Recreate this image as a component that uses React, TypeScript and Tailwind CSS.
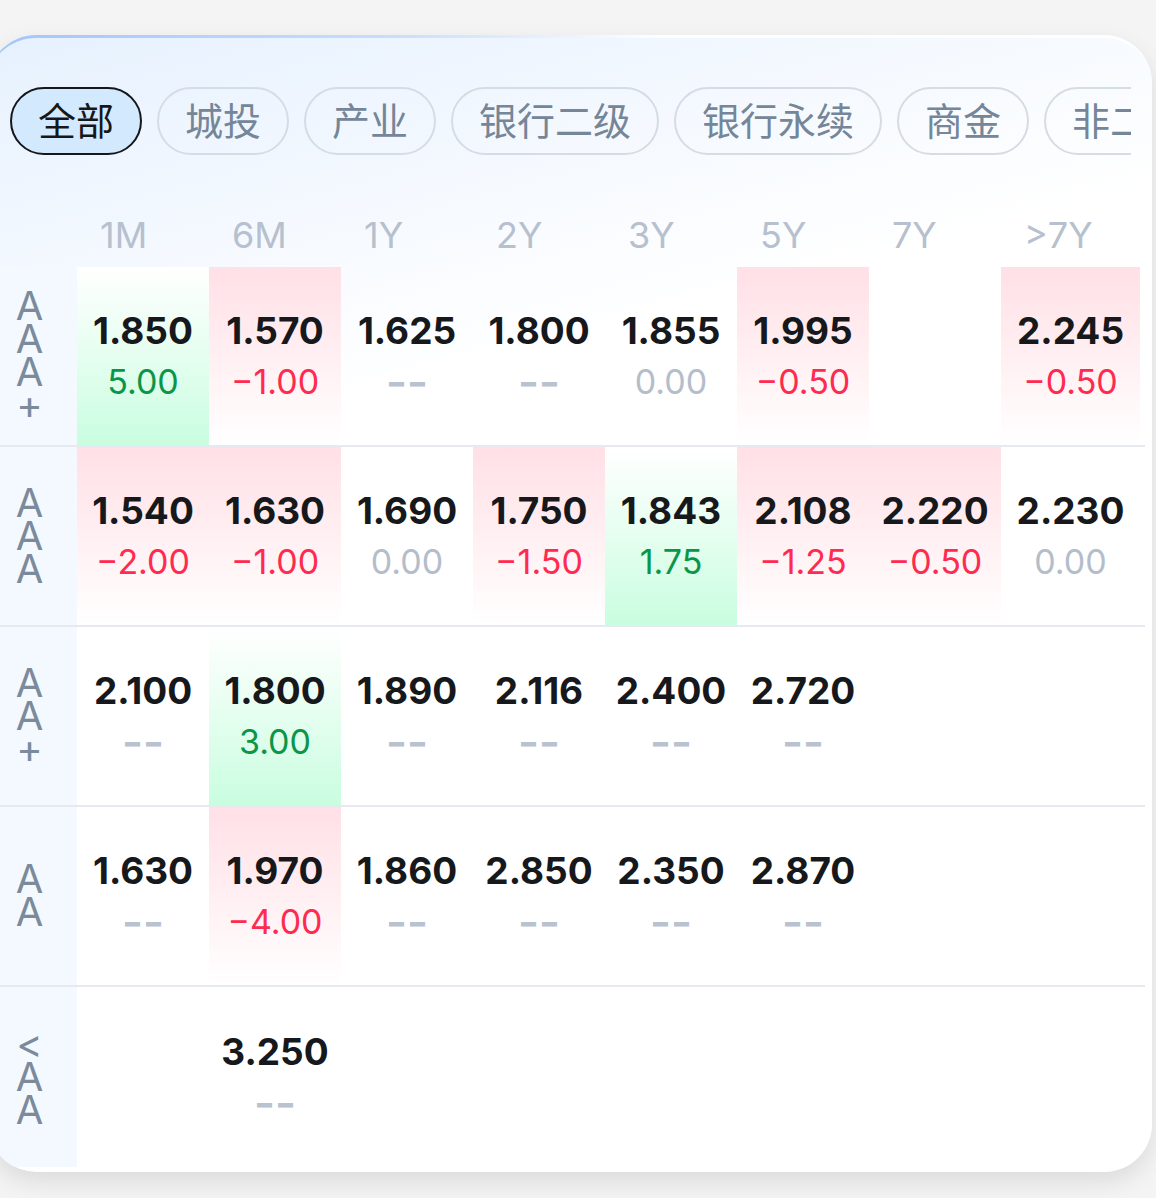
import React from "react";

type Cell = { v: string; c: string; bg?: "g" | "r" } | null;

const chips = ["全部", "城投", "产业", "银行二级", "银行永续", "商金", "非二永"];
const heads = ["1M", "6M", "1Y", "2Y", "3Y", "5Y", "7Y", ">7Y"];

const rows: { label: string[]; cells: Cell[] }[] = [
  {
    label: ["A", "A", "A", "+"],
    cells: [
      { v: "1.850", c: "5.00", bg: "g" },
      { v: "1.570", c: "−1.00", bg: "r" },
      { v: "1.625", c: "--" },
      { v: "1.800", c: "--" },
      { v: "1.855", c: "0.00" },
      { v: "1.995", c: "−0.50", bg: "r" },
      null,
      { v: "2.245", c: "−0.50", bg: "r" },
    ],
  },
  {
    label: ["A", "A", "A"],
    cells: [
      { v: "1.540", c: "−2.00", bg: "r" },
      { v: "1.630", c: "−1.00", bg: "r" },
      { v: "1.690", c: "0.00" },
      { v: "1.750", c: "−1.50", bg: "r" },
      { v: "1.843", c: "1.75", bg: "g" },
      { v: "2.108", c: "−1.25", bg: "r" },
      { v: "2.220", c: "−0.50", bg: "r" },
      { v: "2.230", c: "0.00" },
    ],
  },
  {
    label: ["A", "A", "+"],
    cells: [
      { v: "2.100", c: "--" },
      { v: "1.800", c: "3.00", bg: "g" },
      { v: "1.890", c: "--" },
      { v: "2.116", c: "--" },
      { v: "2.400", c: "--" },
      { v: "2.720", c: "--" },
      null,
      null,
    ],
  },
  {
    label: ["A", "A"],
    cells: [
      { v: "1.630", c: "--" },
      { v: "1.970", c: "−4.00", bg: "r" },
      { v: "1.860", c: "--" },
      { v: "2.850", c: "--" },
      { v: "2.350", c: "--" },
      { v: "2.870", c: "--" },
      null,
      null,
    ],
  },
  {
    label: ["<", "A", "A"],
    cells: [null, { v: "3.250", c: "--" }, null, null, null, null, null, null],
  },
];

function Change({ c }: { c: string }) {
  if (c === "--") {
    return (
      <span className="inline-block text-[#b9c2cf] text-[30px] font-black tracking-[6px] pl-[6px]">
        ––
      </span>
    );
  }
  let color = "text-[#b4bdca]";
  if (c.startsWith("−")) color = "text-[#ff2a4f]";
  else if (c !== "0.00") color = "text-[#0a9548]";
  return <span className={color}>{c}</span>;
}

function DataCell({ cell, last }: { cell: Cell; last: boolean }) {
  const w = last ? "w-[139px]" : "w-[132px]";
  const bg =
    cell?.bg === "g"
      ? "bg-gradient-to-b from-[#ffffff] to-[#c9fde0]"
      : cell?.bg === "r"
      ? "bg-gradient-to-b from-[#ffe0e6] to-[#ffffff]"
      : "";
  return (
    <div className={`${w} h-full shrink-0 flex flex-col items-center justify-center ${bg}`}>
      {cell && (
        <>
          <div className="h-[52px] flex items-center text-[37px] font-bold text-[#16181b] leading-none">
            {cell.v}
          </div>
          <div className="h-[52px] flex items-center text-[34px] font-normal leading-none">
            <Change c={cell.c} />
          </div>
        </>
      )}
    </div>
  );
}

export default function App() {
  return (
    <div
      className="w-[1156px] h-[1198px] overflow-hidden bg-[#f4f4f4] pt-[35px]"
      style={{ fontFamily: "Inter, 'Noto Sans CJK SC', sans-serif" }}
    >
      <div className="-ml-[12px] w-[1164px] h-[1137px] rounded-[48px] overflow-hidden border-t-[3px] border-transparent shadow-[0_10px_24px_rgba(0,0,0,0.10)] [background:linear-gradient(165deg,#e6f1fe_0%,#f3f8ff_16%,#ffffff_32%)_padding-box,linear-gradient(90deg,#a2c5fb_0%,#c9ddfd_35%,#ffffff_58%)_border-box] flex flex-col">
        {/* chips */}
        <div className="pt-[49px] pl-[22px] pr-[21px]">
          <div className="flex gap-[15px] overflow-hidden">
            {chips.map((t, i) => (
              <div
                key={t}
                className={`shrink-0 h-[68px] px-[26px] pb-[4px] rounded-full border-2 flex items-center text-[38px] leading-none ${
                  i === 0
                    ? "bg-[#d3e9fd] border-[#15171a] text-[#15171a]"
                    : "border-[#d6dce4] text-[#748698]"
                }`}
                style={{ fontFamily: "'Noto Sans CJK SC', sans-serif" }}
              >
                {t}
              </div>
            ))}
          </div>
        </div>

        {/* table */}
        <div className="ml-[12px] mt-[48px] w-[1145px]">
          <div className="flex h-[64px] items-center">
            <div className="w-[77px] shrink-0" />
            {heads.map((h, i) => (
              <div
                key={h}
                className={`${i === 7 ? "w-[139px]" : "w-[132px]"} shrink-0 pl-[23px] text-[36px] text-[#b6c0ce] leading-none`}
              >
                {h}
              </div>
            ))}
          </div>
          {rows.map((r, ri) => (
            <div
              key={ri}
              className={`flex h-[180px] ${ri < rows.length - 1 ? "border-b-2 border-[#e6eaf0]" : ""}`}
            >
              <div className="w-[77px] shrink-0 bg-[#f4f9ff] flex flex-col items-center justify-center pr-[18px] pb-[2px]">
                {r.label.map((l, li) => (
                  <div key={li} className="h-[33px] leading-[33px] text-[40px] text-[#7b8b9b] font-normal">
                    {l}
                  </div>
                ))}
              </div>
              {r.cells.map((c, ci) => (
                <DataCell key={ci} cell={c} last={ci === 7} />
              ))}
            </div>
          ))}
        </div>
      </div>
    </div>
  );
}
